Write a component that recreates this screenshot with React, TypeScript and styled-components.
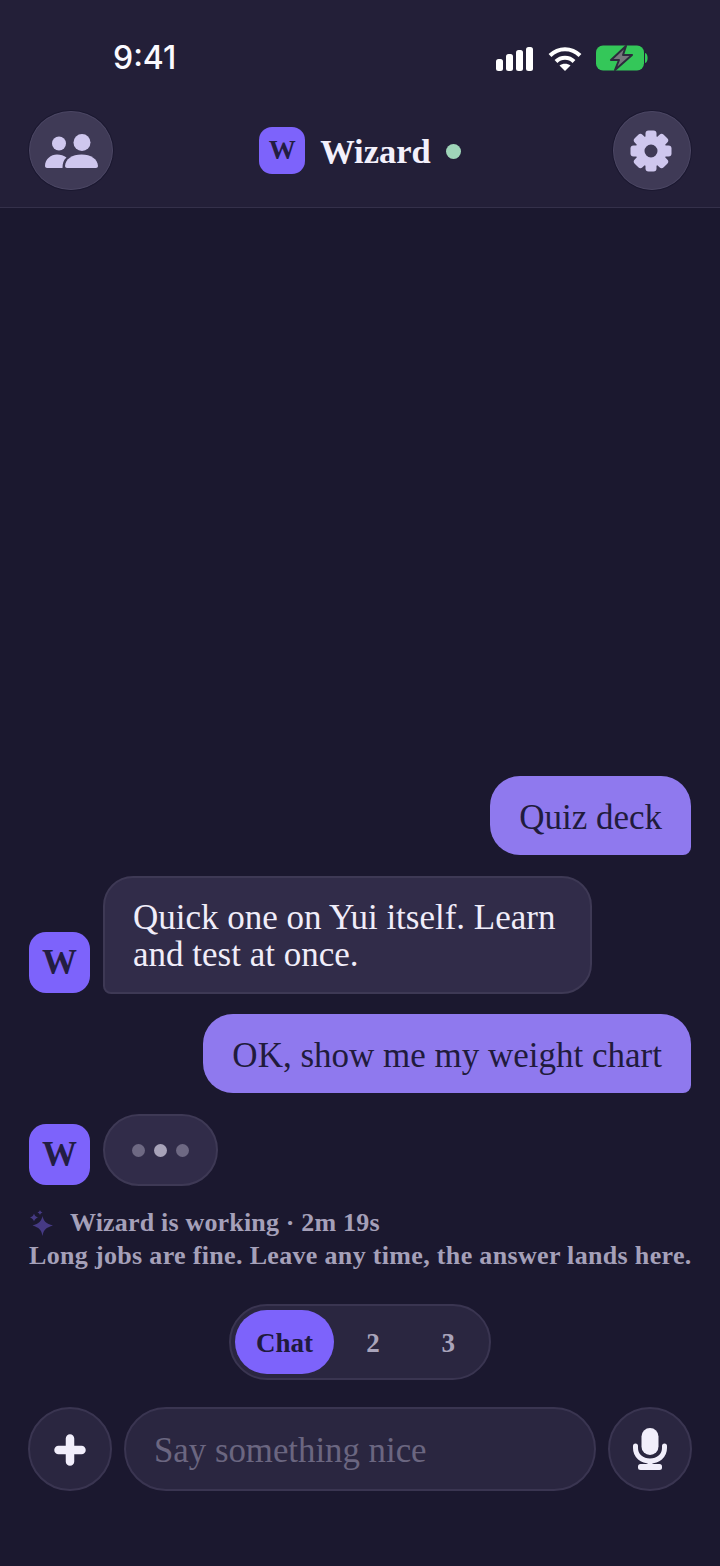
import React from "react";
import styled, { createGlobalStyle } from "styled-components";

const Global = createGlobalStyle`
  html, body { margin: 0; padding: 0; background: #1b182f; }
  * { box-sizing: border-box; }
`;

const serif = `"Liberation Serif", "Times New Roman", serif`;

const Page = styled.div`
  width: 720px;
  height: 1566px;
  display: flex;
  flex-direction: column;
  overflow: hidden;
  background: #1b182f;
  font-family: ${serif};
`;

const Header = styled.header`
  height: 208px;
  flex: none;
  display: flex;
  flex-direction: column;
  background: #231f38;
  border-bottom: 1px solid #34304a;
`;

const StatusBar = styled.div`
  height: 111px;
  padding: 39px 72px 0 113px;
  display: flex;
  justify-content: space-between;
  align-items: flex-start;
`;

const Time = styled.span`
  font-family: Inter, sans-serif;
  font-weight: 500;
  font-size: 32px;
  line-height: 38px;
  color: #fbfaff;
`;

const StatusIcons = styled.div`
  display: flex;
  align-items: flex-end;
  gap: 14px;
  padding-top: 6px;
`;

const NavRow = styled.div`
  padding: 0 29px;
  display: flex;
  align-items: center;
  justify-content: space-between;
`;

const NavButton = styled.button<{ $w: number }>`
  width: ${(p) => p.$w}px;
  height: 79px;
  padding: 0;
  border-radius: 50%;
  display: flex;
  align-items: center;
  justify-content: center;
  background: #3f3a56;
  border: 1px solid #4c4764;
  box-shadow: 0 0 0 1px #1b1830;
  color: #cfc7ee;
`;

const Title = styled.div`
  display: flex;
  align-items: center;
  margin-right: 6px;
`;

const LogoMark = styled.div`
  width: 46px;
  height: 47px;
  border-radius: 13px;
  background: #7d63fb;
  color: #231d42;
  font-weight: 700;
  font-size: 27px;
  display: flex;
  align-items: center;
  justify-content: center;
`;

const TitleText = styled.span`
  margin-left: 15px;
  padding-top: 2px;
  font-size: 34.5px;
  font-weight: 700;
  color: #f3f0fb;
`;

const OnlineDot = styled.i`
  width: 15px;
  height: 15px;
  margin-left: 15px;
  margin-top: 1px;
  border-radius: 50%;
  background: #9fd5b9;
`;

const Thread = styled.main`
  flex: 1;
  min-height: 0;
  padding: 0 29px;
  display: flex;
  flex-direction: column;
  justify-content: flex-end;
  gap: 20px;
`;

const UserBubble = styled.div`
  align-self: flex-end;
  padding: 23px 29px 19px;
  border-radius: 30px 30px 8px 30px;
  background: #8f79ee;
  color: #211b3c;
  font-size: 35px;
  line-height: 37px;
  white-space: nowrap;
`;

const AgentRow = styled.div`
  margin-top: 1px;
  display: flex;
  align-items: flex-end;
  gap: 13px;
`;

const Avatar = styled.div`
  width: 61px;
  height: 61px;
  flex: none;
  margin-bottom: 1px;
  border-radius: 17px;
  background: #7d63fb;
  color: #231d42;
  font-weight: 700;
  font-size: 35px;
  display: flex;
  align-items: center;
  justify-content: center;
`;

const AgentBubble = styled.div`
  width: 489px;
  padding: 21px 28px 19px;
  border-radius: 30px 30px 30px 8px;
  background: #312c49;
  border: 2px solid #3e3955;
  color: #f0edf9;
  font-size: 35px;
  line-height: 37px;
`;

const Typing = styled.div`
  width: 115px;
  height: 72px;
  border-radius: 36px;
  display: flex;
  align-items: center;
  justify-content: center;
  gap: 9px;
  background: #312c49;
  border: 2px solid #3e3955;
`;

const Dot = styled.i<{ $bright?: boolean }>`
  width: 13px;
  height: 13px;
  border-radius: 50%;
  background: ${(p) => (p.$bright ? "#a8a3b9" : "#6e6983")};
`;

const Notice = styled.div`
  color: #a5a0b9;
  font-size: 26px;
  font-weight: 700;
  line-height: 33px;
  letter-spacing: 0.33px;
  white-space: nowrap;
`;

const NoticeHead = styled.div`
  display: flex;
  align-items: center;
  gap: 17px;
  letter-spacing: 0.18px;
`;

const Bottom = styled.footer`
  flex: none;
  padding: 32px 28px 75px;
  display: flex;
  flex-direction: column;
  align-items: center;
  gap: 27px;
`;

const Tabs = styled.nav`
  width: 262px;
  height: 76px;
  padding: 4px;
  display: flex;
  align-items: center;
  gap: 2px;
  border-radius: 38px;
  background: #2a2640;
  border: 2px solid #3a3551;
`;

const Tab = styled.span<{ $active?: boolean }>`
  width: ${(p) => (p.$active ? 100 : 74)}px;
  height: 64px;
  padding-top: 2px;
  border-radius: 32px;
  display: flex;
  align-items: center;
  justify-content: center;
  font-weight: 700;
  font-size: 27px;
  background: ${(p) => (p.$active ? "#7d63fb" : "transparent")};
  color: ${(p) => (p.$active ? "#201a3d" : "#a9a4bb")};
`;

const Composer = styled.div`
  width: 100%;
  display: flex;
  align-items: center;
  gap: 12px;
`;

const RoundButton = styled.button`
  width: 84px;
  height: 84px;
  flex: none;
  padding: 0;
  border-radius: 50%;
  display: flex;
  align-items: center;
  justify-content: center;
  background: #2a2640;
  border: 2px solid #3a3551;
  color: #f1eefb;
`;

const Field = styled.div`
  flex: 1;
  height: 84px;
  padding: 4px 28px 0;
  display: flex;
  align-items: center;
  border-radius: 42px;
  background: #2a2640;
  border: 2px solid #3a3551;
  color: #6b6680;
  font-size: 34.8px;
`;

const Signal = () => (
  <svg width="38" height="24" viewBox="0 0 38 24" fill="#fff">
    <rect x="0" y="12" width="7" height="12" rx="2.5" />
    <rect x="10" y="7" width="7" height="17" rx="2.5" />
    <rect x="20" y="3" width="7" height="21" rx="2.5" />
    <rect x="30" y="0" width="7" height="24" rx="2.5" />
  </svg>
);

const Wifi = () => (
  <svg width="34" height="25" viewBox="0 0 34 25" fill="none" stroke="#fff" strokeWidth="4">
    <path d="M2 9.5 C10.5 1 23.5 1 32 9.5" />
    <path d="M8 15.5 C13 10.5 21 10.5 26 15.5" />
    <path d="M17 25 L11.5 19.5 C14.5 17 19.5 17 22.5 19.5 Z" fill="#fff" stroke="none" />
  </svg>
);

const Battery = () => (
  <svg width="52" height="26" viewBox="0 0 52 26">
    <rect x="0" y="0.5" width="48" height="25" rx="7" fill="#34c759" />
    <path d="M49 8 C52.5 8.5 52.5 17.5 49 18 Z" fill="#34c759" />
    <path d="M30 1 L15 15 H23 L19 25 L36 10 H27 Z" fill="#77767c" stroke="#2c2b3c" strokeWidth="2" strokeLinejoin="round" />
  </svg>
);

const People = () => (
  <svg width="53" height="34" viewBox="0 0 53 34" fill="currentColor">
    <circle cx="14" cy="9.5" r="7" />
    <circle cx="37" cy="8.5" r="8.5" />
    <path d="M0 32 C0 25 6 20.5 12 20.5 C15.5 20.5 19 21.5 21.5 23.5 C18.5 26 17.5 29.5 17.5 34 H2 C1 34 0 33 0 32 Z" />
    <path d="M20 32 C20.5 25 27 20.5 36.5 20.5 C46 20.5 52.5 25 53 32 C53 33 52 34 51 34 H22 C21 34 20 33 20 32 Z" />
  </svg>
);

const GearIcon = styled.svg`
  margin: 1px 2px 0 0;
`;

const Gear = () => (
  <GearIcon width="42" height="42" viewBox="-21 -21 42 42">
    <circle r="11" fill="none" stroke="currentColor" strokeWidth="9" />
    {[0, 45, 90, 135, 180, 225, 270, 315].map((a) => (
      <rect key={a} x="-5.5" y="-20.5" width="11" height="9" rx="3" fill="currentColor" transform={`rotate(${a})`} />
    ))}
  </GearIcon>
);

const Sparkle = () => (
  <svg width="24" height="26" viewBox="0 0 24 26" fill="#463a84">
    <path d="M13.5 6 C14.5 11 17 13.5 24 15.5 C17 17.5 14.5 20 13.5 26 C12.5 20 10 17.5 3.5 15.5 C10 13.5 12.5 11 13.5 6 Z" />
    <path d="M5 3.5 C5.5 5.5 6.5 6.5 9 7.5 C6.5 8.5 5.5 9.5 5 11.5 C4.5 9.5 3.5 8.5 1 7.5 C3.5 6.5 4.5 5.5 5 3.5 Z" />
    <path d="M11 0 C11.3 1.3 12 2 13.5 2.5 C12 3 11.3 3.7 11 5 C10.7 3.7 10 3 8.5 2.5 C10 2 10.7 1.3 11 0 Z" />
  </svg>
);

const PlusIcon = styled.svg`
  margin-top: 2px;
`;

const Plus = () => (
  <PlusIcon width="32" height="32" viewBox="0 0 32 32" fill="none" stroke="currentColor" strokeWidth="8.5" strokeLinecap="round">
    <path d="M16 4.5 V27.5 M4.5 16 H27.5" />
  </PlusIcon>
);

const Mic = () => (
  <svg width="34" height="42" viewBox="0 0 34 42" fill="none">
    <rect x="8.5" y="0" width="17" height="27" rx="8.5" fill="currentColor" />
    <path d="M2.5 18 V20 C2.5 28 9 33 17 33 C25 33 31.5 28 31.5 20 V18" stroke="currentColor" strokeWidth="5" strokeLinecap="round" />
    <rect x="14.5" y="32" width="5" height="6" fill="currentColor" />
    <rect x="5" y="36" width="24" height="6" rx="2.5" fill="currentColor" />
  </svg>
);

export default function App() {
  return (
    <Page>
      <Global />
      <Header>
        <StatusBar>
          <Time>9:41</Time>
          <StatusIcons>
            <Signal />
            <Wifi />
            <Battery />
          </StatusIcons>
        </StatusBar>
        <NavRow>
          <NavButton $w={84}>
            <People />
          </NavButton>
          <Title>
            <LogoMark>W</LogoMark>
            <TitleText>Wizard</TitleText>
            <OnlineDot />
          </Title>
          <NavButton $w={78}>
            <Gear />
          </NavButton>
        </NavRow>
      </Header>
      <Thread>
        <UserBubble>Quiz deck</UserBubble>
        <AgentRow>
          <Avatar>W</Avatar>
          <AgentBubble>Quick one on Yui itself. Learn and test at once.</AgentBubble>
        </AgentRow>
        <UserBubble>OK, show me my weight chart</UserBubble>
        <AgentRow>
          <Avatar>W</Avatar>
          <Typing>
            <Dot />
            <Dot $bright />
            <Dot />
          </Typing>
        </AgentRow>
        <Notice>
          <NoticeHead>
            <Sparkle />
            <span>Wizard is working · 2m 19s</span>
          </NoticeHead>
          <div>Long jobs are fine. Leave any time, the answer lands here.</div>
        </Notice>
      </Thread>
      <Bottom>
        <Tabs>
          <Tab $active>Chat</Tab>
          <Tab>2</Tab>
          <Tab>3</Tab>
        </Tabs>
        <Composer>
          <RoundButton>
            <Plus />
          </RoundButton>
          <Field>Say something nice</Field>
          <RoundButton>
            <Mic />
          </RoundButton>
        </Composer>
      </Bottom>
    </Page>
  );
}
